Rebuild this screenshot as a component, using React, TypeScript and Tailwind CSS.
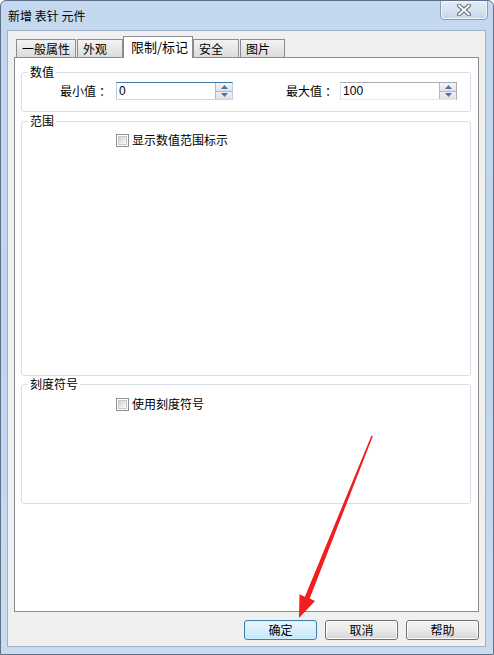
import React from "react";

const font = { fontFamily: '"Noto Sans CJK SC", "Noto Sans", sans-serif' };

function Spin() {
  return (
    <div className="flex flex-col w-[17px] h-full border-l border-[#b7b7b7]">
      <div className="flex-1 flex items-center justify-center bg-gradient-to-b from-[#f6f6f6] to-[#e2e2e2] border-b border-[#b7b7b7]">
        <svg width="7" height="4" viewBox="0 0 7 4">
          <path d="M0 4 L3.5 0 L7 4 Z" fill="#4f6fb5" />
        </svg>
      </div>
      <div className="flex-1 flex items-center justify-center bg-gradient-to-b from-[#f2f2f2] to-[#e0e0e0]">
        <svg width="7" height="4" viewBox="0 0 7 4">
          <path d="M0 0 L3.5 4 L7 0 Z" fill="#4f6fb5" />
        </svg>
      </div>
    </div>
  );
}

function NumberBox({ value, focused, width }: { value: string; focused?: boolean; width: string }) {
  return (
    <div
      className={
        "flex items-stretch h-[18px] bg-white border " +
        width +
        (focused
          ? " border-t-[#3d7bad] border-l-[#b5cfe7] border-b-[#c5daed] border-r-[#b5cfe7]"
          : " border-t-[#abadb3] border-l-[#dbdfe6] border-b-[#e3e9ef] border-r-[#abadb3]")
      }
    >
      <div className="flex-1 pl-[2px] text-[12px] leading-[16px] text-black" style={{ fontFamily: '"Liberation Sans", sans-serif' }}>
        {value}
      </div>
      <Spin />
    </div>
  );
}

function CheckBox({ label }: { label: string }) {
  return (
    <div className="flex items-center">
      <div className="w-[13px] h-[13px] border border-[#8e8f8f] bg-white p-px">
        <div className="w-full h-full bg-gradient-to-br from-[#d2d2d2] via-[#e6e6e6] to-[#fbfbfb] border border-[#c8c8c8]" />
      </div>
      <span className="ml-[3px] text-[12px] leading-[14px] text-black">{label}</span>
    </div>
  );
}

function Tab({ label, width, selected, className = "" }: { label: string; width: string; selected?: boolean; className?: string }) {
  if (selected) {
    return (
      <div
        className={
          "relative z-10 -mb-px h-[22px] bg-white border border-b-0 border-[#898c95] pl-[7px] pt-[2px] text-[13px] leading-[16px] text-black " +
          width +
          " " +
          className
        }
      >
        {label}
      </div>
    );
  }
  return (
    <div
      className={
        "mt-[3px] h-[18px] border border-b-0 border-[#898c95] bg-gradient-to-b from-[#f3f3f3] to-[#dcdcdc] pl-[5px] pt-[2px] text-[12px] leading-[14px] text-black " +
        width +
        " " +
        className
      }
    >
      {label}
    </div>
  );
}

function DlgButton({ label, primary }: { label: string; primary?: boolean }) {
  return (
    <div
      className={
        "w-[73px] h-[20px] rounded-[3px] border flex items-center justify-center text-[12px] leading-[14px] text-black " +
        (primary
          ? "border-[#3c7fb1] bg-gradient-to-b from-[#eaf6fd] via-[#d9f0fc] to-[#bee6fd] shadow-[inset_0_0_0_1px_#d4eefc]"
          : "border-[#707070] bg-gradient-to-b from-[#f2f2f2] via-[#ebebeb] to-[#d5d5d5] shadow-[inset_0_0_0_1px_#fcfcfc]")
      }
    >
      {label}
    </div>
  );
}

export default function App() {
  return (
    <div
      className="relative w-[494px] h-[655px] flex flex-col border border-[#5f7189] rounded-t-[6px] bg-gradient-to-b from-[#c4d9ef] via-[#bfd5ec] to-[#c9dcef] overflow-hidden"
      style={font}
    >
      {/* title bar */}
      <div className="relative h-[29px] flex items-center pl-[7px] shrink-0">
        <span className="text-[12px] leading-[14px] text-black">新增 表针 元件</span>
        <div className="absolute right-[5px] top-[-1px] w-[48px] h-[20px] rounded-b-[4px] border border-[#8b9db3] bg-gradient-to-b from-[#e4edf7] to-[#c6d7ea] flex items-center justify-center shadow-[inset_0_0_0_1px_#eef4fa]">
          <svg width="14" height="12" viewBox="0 0 14 12">
            <path d="M2 1.5 L12 10.5 M12 1.5 L2 10.5" stroke="#5b6572" strokeWidth="4" strokeLinecap="round" />
            <path d="M2 1.5 L12 10.5 M12 1.5 L2 10.5" stroke="#ffffff" strokeWidth="2" strokeLinecap="round" />
          </svg>
        </div>
      </div>

      {/* client area */}
      <div className="ml-[6px] mr-[7px] mb-[7px] flex-1 flex flex-col border border-[#9db1c7] bg-[#f0f0f0] px-[6px] pt-[5px] pb-[6px]">
        {/* tab strip */}
        <div className="flex items-start pl-[2px] shrink-0">
          <Tab label="一般属性" width="w-[60px]" />
          <Tab label="外观" width="w-[46px]" className="ml-[1px]" />
          <Tab label="限制/标记" width="w-[70px]" selected />
          <Tab label="安全" width="w-[46px]" />
          <Tab label="图片" width="w-[45px]" className="ml-[1px]" />
        </div>

        {/* tab page */}
        <div className="flex-1 bg-white border border-[#898c95] pl-[6px] pr-[7px] pt-[7px] flex flex-col">
          <fieldset className="border border-[#d5dfe5] rounded-[3px] px-0 pt-[3px] pb-[11px]">
            <legend className="ml-[6px] px-[2px] text-[12px] leading-[14px] text-black">数值</legend>
            <div className="flex items-center pl-[38px]">
              <span className="text-[12px] leading-[14px] text-black">最小值</span>
              <span className="ml-[3px] text-[12px] leading-[14px] text-black">：</span>
              <div className="ml-[5px]">
                <NumberBox value="0" focused width="w-[117px]" />
              </div>
              <span className="ml-[53px] text-[12px] leading-[14px] text-black">最大值</span>
              <span className="ml-[3px] text-[12px] leading-[14px] text-black">：</span>
              <div className="ml-[3px]">
                <NumberBox value="100" width="w-[117px]" />
              </div>
            </div>
          </fieldset>

          <fieldset className="mt-[2px] h-[262px] border border-[#d5dfe5] rounded-[3px] px-0 pt-[5px]">
            <legend className="ml-[6px] px-[2px] text-[12px] leading-[14px] text-black">范围</legend>
            <div className="pl-[94px]">
              <CheckBox label="显示数值范围标示" />
            </div>
          </fieldset>

          <fieldset className="mt-[1px] h-[127px] border border-[#d5dfe5] rounded-[3px] px-0 pt-[6px]">
            <legend className="ml-[6px] px-[2px] text-[12px] leading-[14px] text-black">刻度符号</legend>
            <div className="pl-[94px]">
              <CheckBox label="使用刻度符号" />
            </div>
          </fieldset>
        </div>

        {/* dialog buttons */}
        <div className="mt-[8px] flex justify-end gap-[8px] shrink-0">
          <DlgButton label="确定" primary />
          <DlgButton label="取消" />
          <DlgButton label="帮助" />
        </div>
      </div>

      {/* red annotation arrow */}
      <svg className="absolute left-0 top-0 pointer-events-none" width="494" height="655" viewBox="0 0 494 655">
        <polygon
          points="371.8,435.3 308.7,597.6 314,600 298,617 298.5,593.3 303.9,595.8 370.4,434.7"
          fill="#f01e1e"
        />
      </svg>
    </div>
  );
}
